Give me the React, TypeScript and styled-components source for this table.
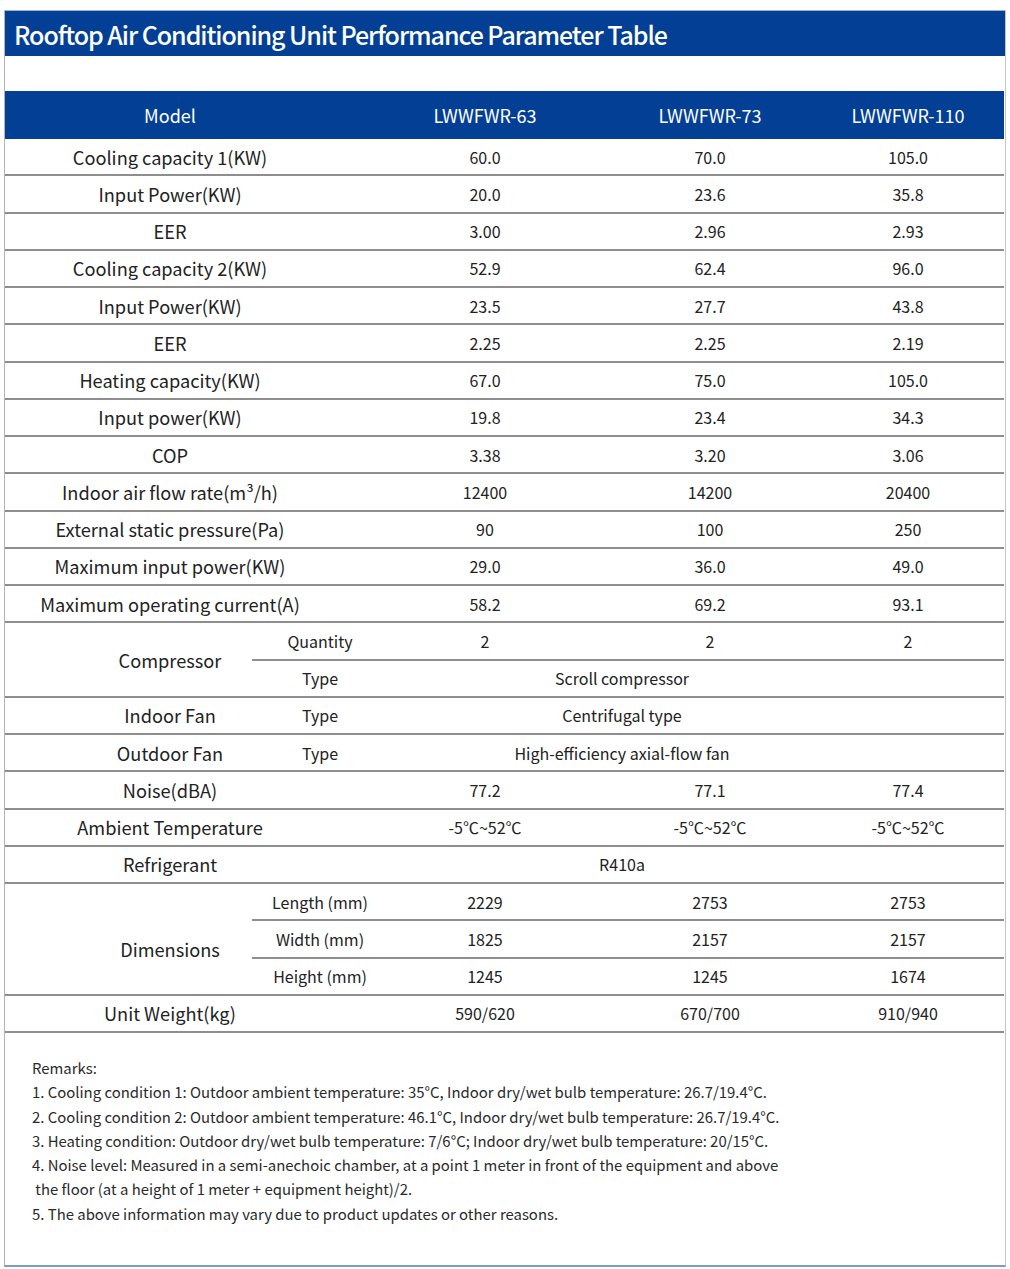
import React from "react";
import styled, { createGlobalStyle } from "styled-components";

const GlobalStyle = createGlobalStyle`
  body {
    margin: 0;
    background: #ffffff;
    font-family: "Noto Sans CJK SC", "Noto Sans", sans-serif;
    color: #222;
  }
`;

const Frame = styled.div`
  margin: 10px 0 0 4px;
  width: 1000px;
  border-left: 1px solid #b4b4b4;
  border-right: 1px solid #c4c4c4;
  border-bottom: 2px solid #7d9cc0;
  border-top: 1px solid #9fb4d4;
`;

const TitleBar = styled.div`
  height: 45px;
  background: #033f94;
  color: #fff;
  display: flex;
  align-items: center;
  padding-left: 9px;
  font-size: 25px;
  font-weight: 500;
  letter-spacing: -1.05px;
`;

const Table = styled.div`
  margin-top: 35px;
  display: grid;
  grid-template-columns: 247px 136px 194px 256px 166px;
  grid-template-rows: 48px repeat(24, 37.25px);
`;

const HeadCell = styled.div<{ $pr?: number; $wide?: boolean }>`
  background: #033f94;
  color: #fff;
  font-size: 18px;
  display: flex;
  align-items: center;
  justify-content: center;
  padding-right: ${(p) => p.$pr ?? 0}px;
  grid-column: ${(p) => (p.$wide ? "1 / 3" : "auto")};
`;

const Cell = styled.div<{
  $col: string;
  $span?: number;
  $size?: number;
  $pl?: number;
  $pr?: number;
  $pt?: number;
}>`
  grid-column: ${(p) => p.$col};
  grid-row: span ${(p) => p.$span ?? 1};
  display: flex;
  align-items: center;
  justify-content: center;
  font-size: ${(p) => p.$size ?? 16}px;
  padding-left: ${(p) => p.$pl ?? 0}px;
  padding-right: ${(p) => p.$pr ?? 0}px;
  padding-top: ${(p) => p.$pt ?? 0}px;
  border-bottom: 2px solid #8e8e8e;
  white-space: nowrap;
`;

const Remarks = styled.div`
  padding: 23px 0 39px 27px;
  font-size: 14.9px;
  line-height: 24.3px;
  color: #2a2a2a;
`;

const simpleRows = [
  ["Cooling capacity 1(KW)", "60.0", "70.0", "105.0"],
  ["Input Power(KW)", "20.0", "23.6", "35.8"],
  ["EER", "3.00", "2.96", "2.93"],
  ["Cooling capacity 2(KW)", "52.9", "62.4", "96.0"],
  ["Input Power(KW)", "23.5", "27.7", "43.8"],
  ["EER", "2.25", "2.25", "2.19"],
  ["Heating capacity(KW)", "67.0", "75.0", "105.0"],
  ["Input power(KW)", "19.8", "23.4", "34.3"],
  ["COP", "3.38", "3.20", "3.06"],
  ["Indoor air flow rate(m³/h)", "12400", "14200", "20400"],
  ["External static pressure(Pa)", "90", "100", "250"],
  ["Maximum input power(KW)", "29.0", "36.0", "49.0"],
  ["Maximum operating current(A)", "58.2", "69.2", "93.1"],
];

const dims = [
  ["Length (mm)", "2229", "2753", "2753"],
  ["Width (mm)", "1825", "2157", "2157"],
  ["Height (mm)", "1245", "1245", "1674"],
];

const remarks = [
  "Remarks:",
  "1. Cooling condition 1: Outdoor ambient temperature: 35°C, Indoor dry/wet bulb temperature: 26.7/19.4°C.",
  "2. Cooling condition 2: Outdoor ambient temperature: 46.1°C, Indoor dry/wet bulb temperature: 26.7/19.4°C.",
  "3. Heating condition: Outdoor dry/wet bulb temperature: 7/6°C; Indoor dry/wet bulb temperature: 20/15°C.",
  "4. Noise level: Measured in a semi-anechoic chamber, at a point 1 meter in front of the equipment and above",
  "\u00a0the floor (at a height of 1 meter + equipment height)/2.",
  "5. The above information may vary due to product updates or other reasons.",
];

function Label({ text }: { text: string }) {
  return (
    <Cell $col="1 / 3" $size={18.2} $pr={53}>
      {text}
    </Cell>
  );
}

function Values({ v }: { v: string[] }) {
  return (
    <>
      <Cell $col="3">{v[0]}</Cell>
      <Cell $col="4">{v[1]}</Cell>
      <Cell $col="5" $pr={26}>
        {v[2]}
      </Cell>
    </>
  );
}

function Wide({ text }: { text: string }) {
  return (
    <Cell $col="3 / 6" $pr={148}>
      {text}
    </Cell>
  );
}

function GroupLabel({ text, span, pt }: { text: string; span: number; pt?: number }) {
  return (
    <Cell $col="1" $span={span} $size={18.2} $pl={83} $pt={pt}>
      {text}
    </Cell>
  );
}

export default function App() {
  return (
    <>
      <GlobalStyle />
      <Frame>
        <TitleBar>Rooftop Air Conditioning Unit Performance Parameter Table</TitleBar>
        <Table>
          <HeadCell $wide $pr={53}>
            Model
          </HeadCell>
          <HeadCell>LWWFWR-63</HeadCell>
          <HeadCell>LWWFWR-73</HeadCell>
          <HeadCell $pr={26}>LWWFWR-110</HeadCell>

          {simpleRows.map((r, i) => (
            <React.Fragment key={i}>
              <Label text={r[0]} />
              <Values v={r.slice(1)} />
            </React.Fragment>
          ))}

          <GroupLabel text="Compressor" span={2} />
          <Cell $col="2">Quantity</Cell>
          <Values v={["2", "2", "2"]} />
          <Cell $col="2">Type</Cell>
          <Wide text="Scroll compressor" />

          <GroupLabel text="Indoor Fan" span={1} />
          <Cell $col="2">Type</Cell>
          <Wide text="Centrifugal type" />

          <GroupLabel text="Outdoor Fan" span={1} />
          <Cell $col="2">Type</Cell>
          <Wide text="High-efficiency axial-flow fan" />

          <Label text="Noise(dBA)" />
          <Values v={["77.2", "77.1", "77.4"]} />

          <Label text="Ambient Temperature" />
          <Values v={["-5℃~52℃", "-5℃~52℃", "-5℃~52℃"]} />

          <Label text="Refrigerant" />
          <Wide text="R410a" />

          <GroupLabel text="Dimensions" span={3} pt={20} />
          {dims.map((d, i) => (
            <React.Fragment key={i}>
              <Cell $col="2">{d[0]}</Cell>
              <Values v={d.slice(1)} />
            </React.Fragment>
          ))}

          <Label text="Unit Weight(kg)" />
          <Values v={["590/620", "670/700", "910/940"]} />
        </Table>
        <Remarks>
          {remarks.map((line, i) => (
            <div key={i}>{line}</div>
          ))}
        </Remarks>
      </Frame>
    </>
  );
}
